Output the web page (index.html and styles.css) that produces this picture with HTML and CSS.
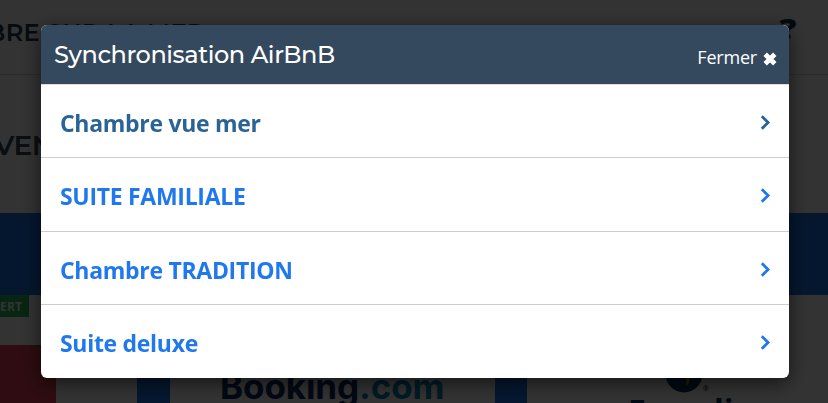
FILE: index.html
```html
<!DOCTYPE html>
<html lang="fr">

<head>
    <meta charset="UTF-8">
    <meta name="viewport" content="width=device-width, initial-scale=1.0">
    <title>Synchronisation AirBnB</title>
    <link rel="stylesheet" href="styles.css">
</head>

<body>
    <div class="page">
        <header class="topbar">
            <h1 class="site-title">BRE SUR LA MER</h1>
            <span class="help">?</span>
        </header>
        <h2 class="section-title">VEN</h2>
        <div class="band"></div>
        <div class="status"><span class="tag">ERT</span></div>
        <div class="partners">
            <div class="alert-block"></div>
            <div class="spacer"></div>
            <div class="partner booking">
                <span class="booking-logo">Booking<span class="dotcom">.com</span></span>
            </div>
            <div class="partner expedia">
                <svg class="globe" width="38" height="38" viewBox="0 0 38 38">
                    <circle cx="19" cy="19" r="18.5" fill="#00355f" />
                    <path d="M22 14h4l-2 14-3 3z" fill="#a88f10" />
                </svg>
                <span class="reg">®</span>
                <span class="expedia-logo">Expedia</span>
            </div>
        </div>
    </div>

    <div class="overlay">
        <div class="modal">
            <div class="modal-header">
                <h3>Synchronisation AirBnB</h3>
                <button type="button" class="close-btn">Fermer
                    <svg width="14" height="14" viewBox="0 0 14 14">
                        <path d="M2.2 2.2l9.6 9.6M11.8 2.2l-9.6 9.6" />
                    </svg>
                </button>
            </div>
            <ul class="room-list">
                <li>
                    <a href="#" class="room active">Chambre vue mer
                        <svg class="chevron" width="11" height="15" viewBox="0 0 11 15"><path d="M1.8 1.2l6.3 6.3-6.3 6.3" /></svg>
                    </a>
                </li>
                <li>
                    <a href="#" class="room">SUITE FAMILIALE
                        <svg class="chevron" width="11" height="15" viewBox="0 0 11 15"><path d="M1.8 1.2l6.3 6.3-6.3 6.3" /></svg>
                    </a>
                </li>
                <li>
                    <a href="#" class="room">Chambre TRADITION
                        <svg class="chevron" width="11" height="15" viewBox="0 0 11 15"><path d="M1.8 1.2l6.3 6.3-6.3 6.3" /></svg>
                    </a>
                </li>
                <li>
                    <a href="#" class="room">Suite deluxe
                        <svg class="chevron" width="11" height="15" viewBox="0 0 11 15"><path d="M1.8 1.2l6.3 6.3-6.3 6.3" /></svg>
                    </a>
                </li>
            </ul>
        </div>
    </div>
</body>

</html>
```

FILE: styles.css
```css
* {
    box-sizing: border-box;
}

body {
    margin: 0;
    height: 403px;
    overflow: hidden;
    background-color: #fff;
    font-family: "Open Sans", "Noto Sans", sans-serif;
}

h1,
h2,
h3 {
    margin: 0;
    font-family: Montserrat, Inter, sans-serif;
}

/* page behind the modal */
.page {
    height: 403px;
    overflow: hidden;
}

.topbar {
    display: flex;
    justify-content: space-between;
    height: 75px;
    padding: 17px 33px 0 0;
    border-bottom: 1px solid #d5d5d5;
}

.site-title {
    margin-left: -13px;
    font-size: 24px;
    font-weight: 600;
    line-height: 31px;
    letter-spacing: 0.4px;
    color: #20384f;
}

.help {
    font-size: 28px;
    font-weight: 800;
    line-height: 23px;
    color: #14304f;
    transform: scaleX(1.2);
}

.section-title {
    height: 138px;
    margin-left: -6px;
    padding-top: 52px;
    font-size: 28px;
    font-weight: 600;
    line-height: 36px;
    letter-spacing: -0.5px;
    color: #34495e;
}

.band {
    height: 82px;
    background-color: #1a73e8;
}

.status {
    height: 50px;
}

.tag {
    display: block;
    width: 29px;
    height: 22px;
    background-color: #28b45a;
    color: #fff;
    font-size: 12px;
    font-weight: 700;
    line-height: 23px;
    letter-spacing: 0.2px;
}

.partners {
    display: flex;
    height: 58px;
    background-color: #1a73e8;
}

.alert-block {
    width: 56px;
    background-color: #e43f55;
}

.spacer {
    width: 81px;
    background-color: #fff;
}

.partner {
    background-color: #fff;
}

.booking {
    width: 325px;
    margin-left: 33px;
    padding: 20px 0 0 50px;
}

.booking-logo {
    font-family: Inter, sans-serif;
    font-size: 35px;
    font-weight: 700;
    line-height: 42px;
    letter-spacing: -0.1px;
    color: #0c2b62;
}

.dotcom {
    color: #0087b8;
}

.expedia {
    display: grid;
    grid-template-columns: 38px 20px;
    width: 301px;
    margin-left: 32px;
    padding: 10px 0 0 138px;
    align-content: start;
}

.reg {
    align-self: end;
    font-size: 7px;
}

.expedia-logo {
    margin: -2px 0 0 -37px;
    font-size: 32px;
    font-weight: 700;
    line-height: 40px;
    color: #00355f;
}

/* modal */
.overlay {
    position: fixed;
    inset: 0;
    display: flex;
    justify-content: center;
    align-items: flex-start;
    padding: 25px 39px 25px 41px;
    background-color: rgba(0, 0, 0, 0.8);
}

.modal {
    width: 748px;
    height: 353px;
    border-radius: 6px;
    overflow: hidden;
    background-color: #fff;
    box-shadow: 0 5px 20px rgba(0, 0, 0, 0.6);
}

.modal-header {
    display: flex;
    justify-content: space-between;
    height: 60px;
    padding: 0 12px 0 13px;
    background-color: #34495e;
    border-bottom: 1px solid #ddd;
    color: #fff;
}

.modal-header h3 {
    font-size: 24px;
    font-weight: 500;
    line-height: 59px;
    letter-spacing: -0.42px;
}

.close-btn {
    display: flex;
    align-items: center;
    gap: 6px;
    padding: 5px 0 0;
    border: none;
    background: none;
    color: #fff;
    font-family: inherit;
    font-size: 18px;
    letter-spacing: -0.2px;
    cursor: pointer;
}

.close-btn svg {
    margin-top: 3px;
    fill: none;
    stroke: #fff;
    stroke-width: 4.8;
}

.room-list {
    display: grid;
    grid-template-rows: 72px 74px 73px 74px;
    margin: 0;
    padding: 0;
    list-style: none;
}

.room-list li + li {
    border-top: 1px solid #ccc;
}

.room {
    display: flex;
    justify-content: space-between;
    align-items: center;
    height: 72px;
    padding: 4px 18px 0 19px;
    color: #2078ee;
    font-size: 23px;
    font-weight: 700;
    letter-spacing: -0.3px;
    text-decoration: none;
}

.room.active {
    color: #2a6496;
}

.chevron {
    margin-top: -2px;
    fill: none;
    stroke: currentColor;
    stroke-width: 2.8;
}
```
